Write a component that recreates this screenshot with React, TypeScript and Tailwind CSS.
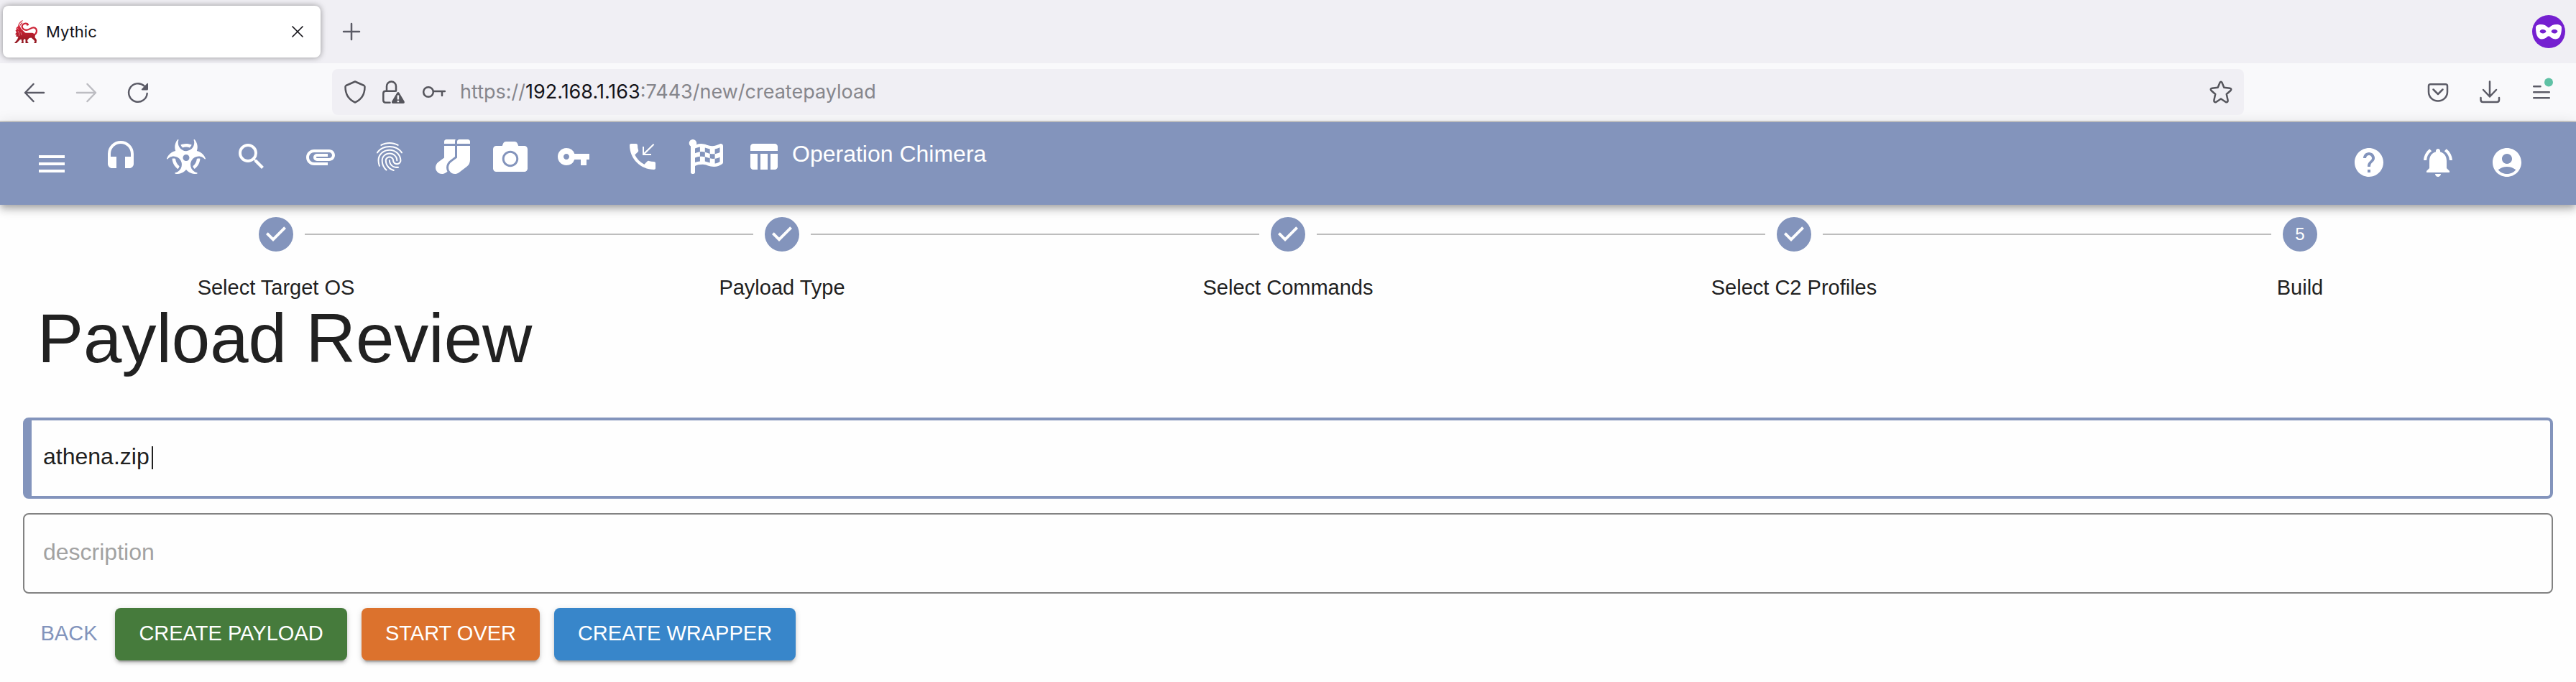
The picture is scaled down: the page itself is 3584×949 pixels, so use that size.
import type { ReactNode } from "react";
import {
  MdMenu,
  MdHeadset,
  MdSearch,
  MdAttachment,
  MdFingerprint,
  MdVpnKey,
  MdPhoneCallback,
  MdTableChart,
  MdHelp,
  MdNotificationsActive,
  MdAccountCircle,
} from "react-icons/md";
import { FaBiohazard, FaSocks, FaCamera, FaFlagCheckered } from "react-icons/fa";

const stroke = {
  fill: "none",
  stroke: "currentColor",
  strokeWidth: 2.5,
  strokeLinecap: "round" as const,
  strokeLinejoin: "round" as const,
};

function MythicLogo() {
  return (
    <svg viewBox="0 0 32 32" className="size-8" aria-hidden="true">
      <defs>
        <linearGradient id="mythic" x1="0" y1="0" x2="0" y2="1">
          <stop offset="0" stopColor="#d8263a" />
          <stop offset="1" stopColor="#8f1720" />
        </linearGradient>
      </defs>
      <path
        d="M27.5 20.5C31.500 18.500 32.300 13 28.500 10.800C24.500 8.500 21.500 13.800 17 13.800C11.500 13.800 9 8.800 12 6C14 4 18 4.200 19 6.200"
        fill="none"
        stroke="#cc2436"
        strokeWidth="2.200"
        strokeLinecap="round"
      />
      <path d="M17.500 8L20 6.500L16.500 5.500Z" fill="#cc2436" />
      <path d="M5.500 9.500C5.500 5 8 2.500 11.500 0.500M7 10C8 6 9 5 11 3.500" fill="none" stroke="#cc2436" strokeWidth="1.100" />
      <path
        fill="url(#mythic)"
        d="M5 8.500L8 9L9.500 12L12 14.500L15 17.500C19 18.500 22 17 26 18L29 20.500L28.500 24L31 27.500L30.500 32H27L28.500 30L27.500 28L23.500 24.500L20.500 25L18 28L18.500 30.500L20 32H15.500L15.500 27L14 26L12.500 28L12.800 32H9.500L10.500 30L9.500 26.500L7.500 27.500L4.500 30.500L3 32H0L4 27L5.500 23.500L2 22.500L3 20.500L1 19.500L3 17L1.500 14.500L3 13L2.500 11Z"
      />
      <path d="M5 15L7 19L6.500 22M9 17L10 21M4 11L6 13" fill="none" stroke="#fff" strokeOpacity="0.600" strokeWidth="0.700" />
    </svg>
  );
}

function ToolbarIcon({ children, label, tone = "text-[#5b5b66]" }: { children: ReactNode; label: string; tone?: string }) {
  return (
    <button type="button" aria-label={label} className={`flex size-[72px] shrink-0 items-center justify-center ${tone}`}>
      <svg viewBox="0 0 32 32" className="size-8 overflow-visible">
        {children}
      </svg>
    </button>
  );
}

function TabStrip() {
  return (
    <div className="flex h-[88px] items-center bg-[#f0eff4] pl-1 pr-3.5">
      <div className="flex h-[72px] w-[442px] items-center rounded-lg bg-white pl-4 pr-5 shadow-[0_0_8px_rgba(0,0,0,0.4)]">
        <MythicLogo />
        <span className="ml-3 grow text-[22px] leading-8 text-[#15141a]">Mythic</span>
        <button type="button" aria-label="Close tab" className="text-[#15141a]">
          <svg viewBox="0 0 24 24" className="size-6">
            <path d="M5 5L19 19M19 5L5 19" {...stroke} strokeWidth={1.7} />
          </svg>
        </button>
      </div>
      <button type="button" aria-label="New tab" className="ml-[27px] text-[#5b5b66]">
        <svg viewBox="0 0 32 32" className="size-8">
          <path d="M16 5V27M5 16H27" {...stroke} />
        </svg>
      </button>
      <button type="button" aria-label="Private window" className="ml-auto">
        <svg viewBox="0 0 48 48" className="size-12">
          <circle cx="24" cy="24" r="23" fill="#7520d0" />
          <path
            fill="#fff"
            fillRule="evenodd"
            d="M6 18.500C6 15.500 9 14 13 14C17.500 14 20.500 15.500 22.500 17.800Q24 19.200 25.500 17.800C27.500 15.500 30.500 14 35 14C39 14 42 15.500 42 18.500C42 28 39.500 34.500 33.500 34.500C29 34.500 27 32 25.500 30.800Q24 29.800 22.500 30.800C21 32 19 34.500 14.500 34.500C8.500 34.500 6 28 6 18.500ZM11.500 23.500C12.500 21.500 14 21 16 21C18 21 19.700 21.900 20.500 23.500C19.500 25.700 18 26.500 16 26.500C14 26.500 12.300 25.700 11.500 23.500ZM27.500 23.500C28.500 21.500 30 21 32 21C34 21 35.700 21.900 36.500 23.500C35.500 25.700 34 26.500 32 26.500C30 26.500 28.300 25.700 27.500 23.500Z"
          />
        </svg>
      </button>
    </div>
  );
}

function AddressBar() {
  return (
    <div className="flex h-16 w-[2660px] shrink items-center rounded-lg bg-[#f0eff4] pl-4 pr-3 text-[#55555c]">
      <svg viewBox="0 0 32 32" className="mr-[22px] size-8 shrink-0" aria-hidden="true">
        <path d="M16 1.500L28.500 7Q29.500 7.500 29.500 8.800C29.500 19 25 26.500 16 30.500C7 26.500 2.500 19 2.500 8.800Q2.500 7.500 3.500 7Z" {...stroke} />
      </svg>
      <svg viewBox="0 0 32 32" className="mr-6 size-8 shrink-0" aria-hidden="true">
        <path d="M6 14.500V8A6.500 6.500 0 0 1 19 8V14.500M10.500 30.700H4.500Q1.300 30.700 1.300 27.500V18Q1.300 14.800 4.500 14.800H18" {...stroke} />
        <path
          fill="currentColor"
          fillRule="evenodd"
          d="M20.400 17Q21.900 14.800 23.400 17L30.600 29Q31.500 31.800 29 32H14.800Q12.300 31.800 13.200 29ZM20.600 20.500V26.500H23.200V20.500ZM20.600 28V30.200H23.200V28Z"
        />
      </svg>
      <svg viewBox="0 0 32 32" className="mr-5 size-8 shrink-0" aria-hidden="true">
        <circle cx="8" cy="16" r="6.800" {...stroke} />
        <path d="M15 15H31M27 15V21" {...stroke} />
      </svg>
      <div
        role="textbox"
        aria-label="Address"
        contentEditable
        suppressContentEditableWarning
        className="grow whitespace-nowrap text-[27px] leading-9 text-[#86868c] outline-none"
      >
        https://<span className="text-[#15141a]">192.168.1.163</span>:7443/new/createpayload
      </div>
      <button type="button" aria-label="Bookmark" className="shrink-0">
        <svg viewBox="0 0 32 32" className="mx-1 size-8">
          <path
            d="M14.500 3Q16 0.500 17.500 3L20.300 9.800L28.300 10.800Q31.500 11.500 29.500 14L23.800 19L25.600 27.500Q25.700 31 22.700 30L16 25.500L9.300 30Q6.300 31 6.400 27.500L8.200 19L2.500 14Q0.500 11.500 3.700 10.800L11.700 9.800Z"
            {...stroke}
          />
        </svg>
      </button>
    </div>
  );
}

function NavBar() {
  return (
    <div className="flex h-[82px] items-center justify-between border-b-2 border-[#cccccc] bg-[#f9f9fb] px-3">
      <div className="flex">
        <ToolbarIcon label="Back">
          <path d="M29 17H3M14.500 5L3 17L14.500 29" {...stroke} />
        </ToolbarIcon>
        <ToolbarIcon label="Forward" tone="text-[#bdbdc2]">
          <path d="M3 17H29M17.500 5L29 17L17.500 29" {...stroke} />
        </ToolbarIcon>
        <ToolbarIcon label="Reload">
          <path d="M28.700 18A12.800 12.800 0 1 1 24.500 7.500" {...stroke} />
          <path d="M30 4.500V12Q30 13.500 28.500 13.500H22Q20 13 21.500 11.500L28.500 4.300Q30 3.300 30 4.500Z" fill="currentColor" />
        </ToolbarIcon>
      </div>
      <AddressBar />
      <div className="flex">
        <ToolbarIcon label="Save to Pocket">
          <path d="M5.500 5.200H26.500Q29 5.200 29 7.700V16A13 12.500 0 0 1 3 16V7.700Q3 5.200 5.500 5.200ZM9.500 12.500L16 19L22.500 12.500" {...stroke} />
        </ToolbarIcon>
        <ToolbarIcon label="Downloads">
          <path d="M16 1.500V22.500M7 13L16 22.500L25 13M3.500 24V27Q3.500 30 6.500 30H26Q29 30 29 27V24" {...stroke} />
        </ToolbarIcon>
        <ToolbarIcon label="Application menu">
          <path d="M5.200 8.200H14.500M5.200 16.200H26.800M5.200 24.200H26.800" {...stroke} />
          <circle cx="26" cy="2.500" r="6" fill="#5fc1a5" />
        </ToolbarIcon>
      </div>
    </div>
  );
}

const links = [
  { label: "Callbacks", icon: MdHeadset, box: "px-6", size: "size-12" },
  { label: "Payloads", icon: FaBiohazard, box: "px-4", size: "h-12 w-[54px]" },
  { label: "Search", icon: MdSearch, box: "px-6", size: "size-12" },
  { label: "Files", icon: MdAttachment, box: "px-6", size: "size-12" },
  { label: "Credentials", icon: MdFingerprint, box: "px-6", size: "size-12" },
  { label: "Proxies", icon: FaSocks, box: "px-4", size: "size-12" },
  { label: "Screenshots", icon: FaCamera, box: "px-4", size: "size-12" },
  { label: "Keys", icon: MdVpnKey, box: "px-6", size: "size-12" },
  { label: "Active callbacks", icon: MdPhoneCallback, box: "px-6", size: "size-12" },
  { label: "Reporting", icon: FaFlagCheckered, box: "px-4", size: "size-12" },
  { label: "Dashboard", icon: MdTableChart, box: "px-4", size: "size-12" },
];

function AppHeader() {
  return (
    <header className="flex h-[115px] items-start bg-[#8394bc] pl-6 pr-12 text-white shadow-[0_4px_8px_-2px_rgba(0,0,0,0.2),0_8px_10px_0_rgba(0,0,0,0.14),0_2px_20px_0_rgba(0,0,0,0.12)]">
      <button type="button" aria-label="Open menu" className="self-center px-6">
        <MdMenu className="size-12" />
      </button>
      <nav className="flex items-start pt-6">
        {links.map(({ label, icon: Icon, box, size }) => (
          <a key={label} href="#" aria-label={label} className={box}>
            <Icon className={size} />
          </a>
        ))}
        <span className="text-[32px] leading-10">Operation Chimera</span>
      </nav>
      <div className="ml-auto flex self-center pb-1">
        <button type="button" aria-label="Help" className="px-6">
          <MdHelp className="size-12" />
        </button>
        <button type="button" aria-label="Notifications" className="px-6">
          <MdNotificationsActive className="size-12" />
        </button>
        <button type="button" aria-label="Account" className="px-6">
          <MdAccountCircle className="size-12" />
        </button>
      </div>
    </header>
  );
}

const steps = ["Select Target OS", "Payload Type", "Select Commands", "Select C2 Profiles", "Build"];

function Stepper() {
  return (
    <ol className="grid grid-cols-5 px-8 pt-[17px]">
      {steps.map((step, i) => (
        <li key={step} className="flex flex-col items-center">
          <div className="flex w-full items-center gap-4">
            <span className={i === 0 ? "h-0.5 grow" : "h-0.5 grow bg-[#bdbdbd]"} />
            {i < steps.length - 1 ? (
              <svg viewBox="0 0 24 24" className="size-12 text-[#8394bc]" aria-hidden="true">
                <path
                  fill="currentColor"
                  d="M12 0a12 12 0 1 0 0 24 12 12 0 0 0 0-24zm-2 17l-5-5 1.400-1.400 3.600 3.600 7.600-7.600L19 8l-9 9z"
                />
              </svg>
            ) : (
              <span className="flex size-12 items-center justify-center rounded-full bg-[#8394bc] text-2xl text-white">{i + 1}</span>
            )}
            <span className={i === steps.length - 1 ? "h-0.5 grow" : "h-0.5 grow bg-[#bdbdbd]"} />
          </div>
          <span className="mt-[30px] text-[29px] leading-10">{step}</span>
        </li>
      ))}
    </ol>
  );
}

const actions = [
  { label: "CREATE PAYLOAD", style: "min-w-[323px] bg-[#467b3c]" },
  { label: "START OVER", style: "min-w-[248px] bg-[#dc722d]" },
  { label: "CREATE WRAPPER", style: "min-w-[336px] bg-[#3886ca]" },
];

export default function App() {
  return (
    <div className="min-h-screen bg-[#fefefe] font-['Liberation_Sans',Arial,sans-serif] text-[#212121]">
      <div className="font-['Inter',sans-serif]">
        <TabStrip />
        <NavBar />
      </div>
      <AppHeader />
      <main>
        <Stepper />
        <h1 className="px-[52px] text-[96px] leading-[102px]">Payload Review</h1>
        <form className="flex flex-col gap-5 px-8 pt-[59px]">
          <div className="relative">
            <input
              aria-label="Filename"
              defaultValue="athena.zip"
              className="block h-[113px] w-full rounded-lg border-4 border-l-12 border-[#8394bc] bg-transparent pb-1 pl-4 pr-6 text-[32px] caret-transparent outline-none"
            />
            <span className="absolute left-[179px] top-10 h-8 w-0.5 bg-[#212121]" />
          </div>
          <input
            aria-label="Description"
            placeholder="description"
            className="block h-28 w-full rounded-lg border-2 border-[#828282] bg-transparent px-[26px] pb-1 text-[32px] outline-none placeholder:text-[#a2a2a2]"
          />
          <div className="flex text-[29px] leading-[48px]">
            <button type="button" className="w-32 pb-1 text-[#8394bc]">
              BACK
            </button>
            <div className="flex gap-5">
              {actions.map(({ label, style }) => (
                <button
                  key={label}
                  type="button"
                  className={`h-[73px] rounded-lg pb-1 text-white shadow-[0_6px_2px_-4px_rgba(0,0,0,0.2),0_4px_4px_0_rgba(0,0,0,0.14),0_2px_10px_0_rgba(0,0,0,0.12)] ${style}`}
                >
                  {label}
                </button>
              ))}
            </div>
          </div>
        </form>
      </main>
    </div>
  );
}
